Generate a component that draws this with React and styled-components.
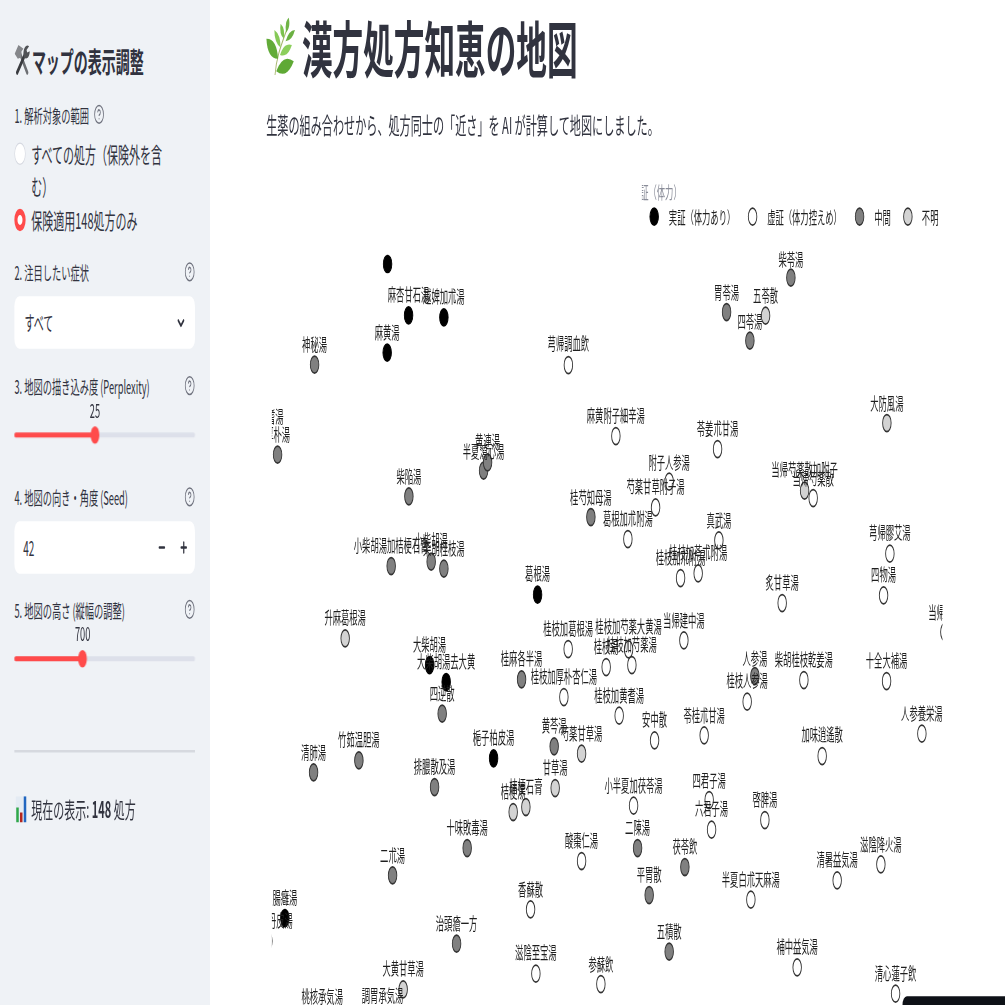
import React from "react";
import styled, { createGlobalStyle } from "styled-components";
import { ChevronDown, CircleHelp, Minus, Plus } from "lucide-react";

// the reference is a wide page squeezed into a square window
const SCALE_X = 0.625;
const SCALE_Y = 1.25;
const CHART_LEFT = 272;
const CHART_TOP = 150;

const GlobalStyle = createGlobalStyle`
  html, body {
    margin: 0;
    height: 100%;
    overflow: hidden;
    background: #fff;
  }
  body {
    font-family: "Noto Sans CJK JP", "Noto Sans", sans-serif;
    color: #31333f;
  }
`;

// name, kind, x, marker y, label y (window pixels)
const POINTS = [
  ["", "b", 387.7, 264, 0],
  ["麻杏甘石湯", "b", 408.7, 315.3, 294.3],
  ["越婢加朮湯", "b", 444, 317.3, 296],
  ["麻黄湯", "b", 387.3, 352.7, 331.7],
  ["神秘湯", "g", 314.7, 364.7, 344.3],
  ["防已黄耆湯", "g", 263, 437, 416],
  ["厚朴湯", "g", 277.7, 454.7, 434],
  ["半夏瀉心湯", "g", 483.7, 470.7, 450.7],
  ["黄連湯", "g", 487.7, 462.3, 441],
  ["柴陥湯", "g", 409, 496.3, 476],
  ["柴苓湯", "g", 791, 277.7, 258.7],
  ["胃苓湯", "g", 726.7, 312, 291.7],
  ["五苓散", "l", 765.7, 315.7, 295.3],
  ["四苓湯", "g", 750, 340.7, 320.7],
  ["芎帰調血飲", "w", 568.5, 365, 343.5],
  ["麻黄附子細辛湯", "w", 616, 436, 415],
  ["苓姜朮甘湯", "w", 717.7, 449, 428.3],
  ["附子人参湯", "w", 669.3, 481.7, 462],
  ["芍薬甘草附子湯", "w", 655.7, 507.3, 486],
  ["桂芍知母湯", "g", 591, 517, 496.7],
  ["葛根加朮附湯", "w", 628, 539, 518.3],
  ["真武湯", "w", 719, 540.3, 520],
  ["桂枝加苓朮附湯", "w", 698.3, 573.3, 552.3],
  ["桂枝加朮附湯", "w", 680.7, 578, 556.7],
  ["炙甘草湯", "w", 782.3, 603, 582],
  ["当帰芍薬散加附子", "l", 804.7, 490.7, 469.3],
  ["当帰芍薬散", "w", 813.3, 498, 478.3],
  ["当帰建中湯", "w", 684, 640.3, 620],
  ["桂枝加葛根湯", "w", 568.3, 649, 628],
  ["桂枝加芍薬大黄湯", "w", 628.7, 649.3, 625.7],
  ["桂枝湯", "w", 606.3, 667, 645.7],
  ["桂枝加芍薬湯", "w", 632, 665, 644.3],
  ["桂麻各半湯", "g", 521.7, 679.3, 658],
  ["桂枝加厚朴杏仁湯", "w", 564, 697, 675.7],
  ["桂枝加黄耆湯", "w", 619.3, 715.7, 695],
  ["安中散", "w", 654.7, 740.3, 719.3],
  ["苓桂朮甘湯", "w", 704.3, 735.3, 714.7],
  ["黄芩湯", "g", 554.3, 746.3, 725.3],
  ["芍薬甘草湯", "l", 581.7, 753.7, 732.7],
  ["甘草湯", "l", 555.3, 788, 766.7],
  ["桔梗石膏", "l", 526, 807, 786.3],
  ["桔梗湯", "l", 513.3, 812, 790.7],
  ["小半夏加茯苓湯", "w", 633.7, 805.7, 784.7],
  ["四君子湯", "w", 709.3, 800, 780.3],
  ["六君子湯", "w", 711.7, 829.7, 808.3],
  ["二陳湯", "g", 637.7, 848, 827.3],
  ["人参湯", "g", 755, 676, 658.3],
  ["桂枝人参湯", "w", 747.3, 701.7, 680],
  ["柴胡桂枝乾姜湯", "w", 804, 680, 658.7],
  ["十全大補湯", "w", 886.7, 681, 660],
  ["人参養栄湯", "w", 922, 733.7, 712.7],
  ["加味逍遙散", "w", 822.3, 756, 734.3],
  ["大防風湯", "l", 887, 423, 402.7],
  ["芎帰膠艾湯", "w", 890, 553.7, 532],
  ["四物湯", "w", 883.7, 595.3, 574],
  ["当帰飲子", "w", 945, 632, 611.7],
  ["小柴胡湯加桔梗石膏", "g", 391.3, 566, 545],
  ["小柴胡湯", "g", 431.3, 561.7, 540],
  ["柴胡桂枝湯", "g", 444, 568.7, 548.3],
  ["葛根湯", "b", 537.7, 594.7, 573.3],
  ["升麻葛根湯", "l", 345.3, 638.3, 617.3],
  ["大柴胡湯", "b", 429.7, 665, 644],
  ["大柴胡湯去大黄", "b", 446.3, 682, 661.3],
  ["四逆散", "g", 442.3, 713.7, 693],
  ["竹筎温胆湯", "g", 359, 760.3, 739.3],
  ["清肺湯", "g", 313.7, 772.3, 751.7],
  ["梔子柏皮湯", "b", 493.7, 758.3, 737.3],
  ["排膿散及湯", "g", 434.7, 787, 766.3],
  ["十味敗毒湯", "g", 467.3, 848, 827.3],
  ["二朮湯", "g", 392.7, 875.3, 854.7],
  ["酸棗仁湯", "w", 581.7, 861, 839.7],
  ["香蘇散", "w", 530.7, 909.3, 888.7],
  ["腸癰湯", "b", 285, 918, 897.3],
  ["大黄牡丹皮湯", "w", 268, 941, 920],
  ["治頭瘡一方", "g", 456.7, 943.7, 923.3],
  ["滋陰至宝湯", "w", 536, 973.7, 952.3],
  ["参蘇飲", "w", 601, 984, 963.7],
  ["大黄甘草湯", "l", 403.3, 989.3, 968.3],
  ["調胃承気湯", "w", 382.7, 1016, 994.7],
  ["桃核承気湯", "g", 322.3, 1016, 995.7],
  ["啓脾湯", "w", 765, 820, 799],
  ["茯苓飲", "g", 685, 867, 846.3],
  ["平胃散", "g", 649.3, 895, 874],
  ["半夏白朮天麻湯", "w", 751, 899.7, 878.7],
  ["清暑益気湯", "w", 837.3, 880.3, 859.3],
  ["滋陰降火湯", "w", 881, 864.3, 843.7],
  ["五積散", "g", 669.3, 951.7, 931],
  ["補中益気湯", "w", 797.3, 967.3, 946],
  ["清心蓮子飲", "w", 895.7, 993.7, 972.7],
];

const LEGEND = [
  ["実証（体力あり）", "b", 654.3, 669],
  ["虚証（体力控えめ）", "w", 752.7, 767.3],
  ["中間", "g", 859.7, 874.3],
  ["不明", "l", 908, 922],
];

const FILLS = { b: "#000000", w: "#ffffff", g: "#808080", l: "#d3d3d3" };

const toX = (x) => (x - CHART_LEFT) / SCALE_X;
const toY = (y) => (y - CHART_TOP) / SCALE_Y;

const leaf = (x1, y1, x2, y2, w) => {
  const mx = (x1 + x2) / 2;
  const my = (y1 + y2) / 2;
  const dx = x2 - x1;
  const dy = y2 - y1;
  const len = Math.hypot(dx, dy);
  const nx = (-dy / len) * w;
  const ny = (dx / len) * w;
  return `M${x1} ${y1}Q${mx + nx} ${my + ny} ${x2} ${y2}Q${mx - nx} ${my - ny} ${x1} ${y1}Z`;
};

const HerbIcon = () => (
  <LeafSvg viewBox="0 0 46 46">
    <path d="M14 46C16 32 24 22 34 8" fill="none" stroke="#a7b76e" strokeWidth="1.4" />
    <path d={leaf(32, 12, 36, 0, 5.5)} fill="#6fb446" />
    <path d={leaf(28, 17, 23, 5, 5.5)} fill="#7cc24e" />
    <path d={leaf(31, 19, 46, 10, 5)} fill="#6bb042" />
    <path d={leaf(23, 24, 13, 10, 6)} fill="#86c957" />
    <path d={leaf(19, 33, 0, 17, 11)} fill="#62ab38" />
    <path d={leaf(22, 30, 41, 22, 7)} fill="#8ccf5c" />
    <path d={leaf(16, 43, 44, 35, 11)} fill="#5fa935" />
  </LeafSvg>
);

const ToolsIcon = () => (
  <ToolsSvg viewBox="0 0 24 24">
    <path d="M20 22L8 6" stroke="#6d6f73" strokeWidth="3.6" strokeLinecap="round" />
    <path d="M0 7L6 0L14 3L11 5L10 10L5 11Z" fill="#85878b" />
    <path d="M4 22L17 7" stroke="#3a3c40" strokeWidth="3.6" strokeLinecap="round" />
    <path d="M14 7C14 3 18 -1 23 1L19 4L20 6L24 5C24 10 19 12 15 10Z" fill="#505256" />
  </ToolsSvg>
);

const ChartIcon = () => (
  <StatSvg viewBox="0 0 18 21">
    <rect width="18" height="21" fill="#e4ebf3" />
    <rect x="1" y="9" width="4" height="12" fill="#2fa84a" />
    <rect x="7" y="13" width="4" height="8" fill="#b3261e" />
    <rect x="13" y="0" width="4" height="21" fill="#2166c0" />
  </StatSvg>
);

const Help = () => (
  <HelpIcon>
    <CircleHelp size={17} strokeWidth={1.8} />
  </HelpIcon>
);

const Slider = ({ value, pct }) => (
  <SliderBox>
    <SliderValue $pct={pct}>{value}</SliderValue>
    <Track>
      <TrackFill $pct={pct} />
      <Thumb $pct={pct} />
    </Track>
  </SliderBox>
);

const Sidebar = () => (
  <Side>
    <SideTitle>
      <ToolsIcon />
      マップの表示調整
    </SideTitle>

    <InlineLabel $top={19}>
      1. 解析対象の範囲
      <Help />
    </InlineLabel>
    <RadioGroup>
      <RadioRow>
        <RadioDot />
        <RadioText>すべての処方（保険外を含む）</RadioText>
      </RadioRow>
      <RadioRow>
        <RadioDot $on />
        <RadioText>保険適用148処方のみ</RadioText>
      </RadioRow>
    </RadioGroup>

    <FieldLabel $top={20}>
      2. 注目したい症状
      <Help />
    </FieldLabel>
    <InputBox>
      すべて
      <ChevronDown size={17} strokeWidth={3} />
    </InputBox>

    <FieldLabel $top={21}>
      3. 地図の描き込み度 (Perplexity)
      <Help />
    </FieldLabel>
    <Slider value="25" pct={44.6} />

    <FieldLabel $top={32}>
      4. 地図の向き・角度 (Seed)
      <Help />
    </FieldLabel>
    <InputBox $compact>
      42
      <Steppers>
        <Minus size={14} strokeWidth={3.4} />
        <Plus size={14} strokeWidth={3.4} />
      </Steppers>
    </InputBox>

    <FieldLabel $top={20}>
      5. 地図の高さ (縦幅の調整)
      <Help />
    </FieldLabel>
    <Slider value="700" pct={37.8} />

    <Divider />

    <Status>
      <ChartIcon />
      <span>
        現在の表示: <strong>148</strong> 処方
      </span>
    </Status>
  </Side>
);

const Chart = () => (
  <ChartSvg width={(942.3 - CHART_LEFT) / SCALE_X} height={855 / SCALE_Y}>
    <defs>
      <clipPath id="legend-clip">
        <rect x={toX(642)} y="0" width="900" height="80" />
      </clipPath>
    </defs>
    <LegendTitle x={toX(632)} y={toY(192)} clipPath="url(#legend-clip)">
      実証（体力）
    </LegendTitle>
    {LEGEND.map(([name, kind, mx, tx]) => (
      <g key={name}>
        <Marker $kind={kind} cx={toX(mx)} cy={toY(216.7)} r="6.8" />
        <LegendText x={toX(tx)} y={toY(216.7)}>
          {name}
        </LegendText>
      </g>
    ))}
    {POINTS.map(([name, kind, x, my]) => (
      <Marker key={name + x} $kind={kind} cx={toX(x)} cy={toY(my)} r="6.8" />
    ))}
    {POINTS.filter((p) => p[0]).map(([name, , x, , ly]) => (
      <Label key={name} x={toX(x)} y={toY(ly)}>
        {name}
      </Label>
    ))}
  </ChartSvg>
);

export default function App() {
  return (
    <>
      <GlobalStyle />
      <Page>
        <Sidebar />
        <Main>
          <Title>
            <HerbIcon />
            漢方処方知恵の地図
          </Title>
          <Lead>生薬の組み合わせから、処方同士の「近さ」を AI が計算して地図にしました。</Lead>
          <Chart />
        </Main>
        <Corner />
      </Page>
    </>
  );
}

const Page = styled.div`
  position: relative;
  display: flex;
  width: 1608px;
  height: 804px;
  overflow: hidden;
  transform: scale(${SCALE_X}, ${SCALE_Y});
  transform-origin: 0 0;
`;

const Side = styled.aside`
  box-sizing: border-box;
  width: 336px;
  flex: none;
  height: 100%;
  padding: 32px 24px 0 23px;
  background: #eff2f6;
`;

const SideTitle = styled.h2`
  display: flex;
  align-items: center;
  gap: 3px;
  margin: 0;
  height: 32px;
  font-size: 22.4px;
  font-weight: 600;
  line-height: 32px;
`;

const ToolsSvg = styled.svg`
  width: 25px;
  height: 24px;
  flex: none;
`;

const FieldLabel = styled.div`
  box-sizing: border-box;
  display: flex;
  align-items: center;
  justify-content: space-between;
  height: 20px;
  padding-bottom: 3px;
  margin-top: ${(p) => p.$top}px;
  font-size: 14.8px;
  line-height: 17px;
`;

const InlineLabel = styled(FieldLabel)`
  justify-content: flex-start;
  gap: 8px;
`;

const HelpIcon = styled.span`
  display: flex;
  color: #6f727e;
`;

const RadioGroup = styled.div`
  display: flex;
  flex-direction: column;
  margin-top: 7px;
`;

const RadioRow = styled.label`
  display: flex;
  gap: 9px;
  font-size: 17.6px;
  line-height: 26.4px;
`;

const RadioText = styled.span`
  max-width: 225px;
`;

const RadioDot = styled.span`
  box-sizing: border-box;
  flex: none;
  width: 18px;
  height: 18px;
  margin-top: 4px;
  border-radius: 50%;
  background: #fff;
  border: 1px solid #d5d8e0;
  ${(p) => p.$on && "border: 5px solid #ff4b4b;"}
`;

const InputBox = styled.div`
  box-sizing: border-box;
  display: flex;
  align-items: center;
  justify-content: space-between;
  height: 42px;
  margin-top: 8px;
  padding: 0 14px 0 ${(p) => (p.$compact ? 14 : 16)}px;
  background: #fff;
  border-radius: 8px;
  font-size: 16px;
`;

const Steppers = styled.div`
  display: flex;
  gap: 21px;
  color: #31333f;
  margin-right: -3px;
`;

const SliderBox = styled.div`
  height: 38px;
  margin-top: -2px;
  padding-top: 1px;
`;

const SliderValue = styled.div`
  width: max-content;
  margin-left: ${(p) => p.$pct}%;
  transform: translateX(-50%);
  font-size: 14.8px;
  line-height: 18px;
`;

const Track = styled.div`
  position: relative;
  height: 4px;
  margin-top: 9px;
  border-radius: 2px;
  background: #dde0ea;
`;

const TrackFill = styled.div`
  height: 100%;
  width: ${(p) => p.$pct}%;
  border-radius: 2px;
  background: #ff4b4b;
`;

const Thumb = styled.div`
  position: absolute;
  top: -5px;
  left: ${(p) => p.$pct}%;
  width: 14px;
  height: 14px;
  margin-left: -7px;
  border-radius: 50%;
  background: #ff4b4b;
`;

const Divider = styled.hr`
  margin: 64px 0 0;
  border: 0;
  height: 2px;
  background: #d6d9df;
`;

const Status = styled.div`
  display: flex;
  align-items: center;
  gap: 7px;
  margin-top: 32px;
  font-size: 17.6px;
  line-height: 26px;

  strong {
    font-weight: 700;
  }
`;

const StatSvg = styled.svg`
  width: 18px;
  height: 21px;
  flex: none;
  margin-left: 2px;
`;

const Main = styled.main`
  flex: 1;
  min-width: 0;
  padding: 10px 0 0 90px;
`;

const Title = styled.h1`
  display: flex;
  align-items: center;
  gap: 11px;
  margin: 0;
  height: 54px;
  font-size: 49px;
  font-weight: 700;
  line-height: 54px;
`;

const LeafSvg = styled.svg`
  width: 46px;
  height: 46px;
  flex: none;
`;

const Lead = styled.p`
  margin: 22px 0 0;
  font-size: 17.8px;
  line-height: 26px;
`;

const ChartSvg = styled.svg`
  position: absolute;
  top: ${CHART_TOP / SCALE_Y}px;
  left: ${CHART_LEFT / SCALE_X}px;
`;

const Marker = styled.circle`
  fill: ${(p) => FILLS[p.$kind]};
  stroke: ${(p) => (p.$kind === "b" ? "#000" : "#333")};
  stroke-width: 1.4px;
`;

const Label = styled.text`
  fill: #1f1f1f;
  font-size: 13.3px;
  text-anchor: middle;
  dominant-baseline: central;
`;

const LegendText = styled.text`
  fill: #1f1f1f;
  font-size: 13.3px;
  dominant-baseline: central;
`;

const LegendTitle = styled.text`
  fill: #8a8d99;
  font-size: 13.3px;
  dominant-baseline: central;
`;

const Corner = styled.div`
  position: absolute;
  right: 0;
  bottom: 0;
  width: 164px;
  height: 7px;
  border-radius: 12px 0 0 0;
  background: #0e1117;
`;
